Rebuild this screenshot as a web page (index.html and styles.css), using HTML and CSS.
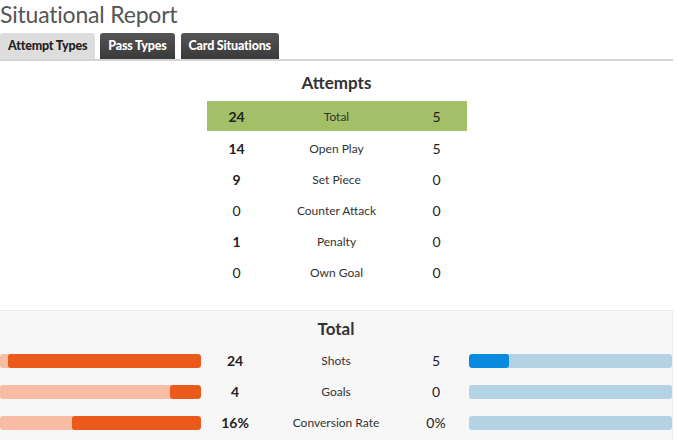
FILE: index.html
```html
<!DOCTYPE html>
<html>
<head>
<meta charset="utf-8">
<link rel="stylesheet" href="styles.css">
</head>
<body>
<div class="report">
  <h1 class="title">Situational Report</h1>
  <div class="tabs">
    <div class="tab active">Attempt Types</div>
    <div class="tab">Pass Types</div>
    <div class="tab">Card Situations</div>
  </div>
  <div class="attempts">
    <h2 class="heading">Attempts</h2>
    <div class="table">
      <div class="row highlight"><span class="num b">24</span><span class="label">Total</span><span class="num">5</span></div>
      <div class="row"><span class="num b">14</span><span class="label">Open Play</span><span class="num">5</span></div>
      <div class="row"><span class="num b">9</span><span class="label">Set Piece</span><span class="num">0</span></div>
      <div class="row"><span class="num">0</span><span class="label">Counter Attack</span><span class="num">0</span></div>
      <div class="row"><span class="num b">1</span><span class="label">Penalty</span><span class="num">0</span></div>
      <div class="row"><span class="num">0</span><span class="label">Own Goal</span><span class="num">0</span></div>
    </div>
  </div>
  <div class="total">
    <h2 class="heading">Total</h2>
    <div class="trow">
      <div class="bar home"><div class="fill" style="width:96%"></div></div>
      <span class="num b">24</span><span class="label">Shots</span><span class="num">5</span>
      <div class="bar away"><div class="fill" style="width:19.5%"></div></div>
    </div>
    <div class="trow">
      <div class="bar home"><div class="fill" style="width:15.5%"></div></div>
      <span class="num b">4</span><span class="label">Goals</span><span class="num">0</span>
      <div class="bar away"><div class="fill" style="width:0%"></div></div>
    </div>
    <div class="trow">
      <div class="bar home"><div class="fill" style="width:64%"></div></div>
      <span class="num b">16%</span><span class="label">Conversion Rate</span><span class="num">0%</span>
      <div class="bar away"><div class="fill" style="width:0%"></div></div>
    </div>
  </div>
</div>
</body>
</html>
```
FILE: styles.css
```css
html, body {
  margin: 0;
  padding: 0;
  background: #fff;
  font-family: Lato, "Open Sans", sans-serif;
  color: #333;
}
.report {
  width: 673px;
}
.title {
  margin: 0;
  font-size: 23px;
  font-weight: 400;
  color: #555;
  line-height: 28px;
  letter-spacing: -0.2px;
}
.tabs {
  display: flex;
  gap: 6px;
  margin-top: 5px;
  border-bottom: 2px solid #d4d4d4;
}
.tab {
  height: 26px;
  line-height: 26px;
  padding: 0 8px;
  font-size: 12.5px;
  font-weight: 900;
  letter-spacing: -0.2px;
  color: #fff;
  background: linear-gradient(#555, #3a3a3a);
  border-radius: 3px 3px 0 0;
}
.tab.active {
  background: #ddd;
  color: #222;
  margin-right: -1px;
}
.attempts {
  display: flex;
  flex-direction: column;
  align-items: center;
  padding-bottom: 22px;
}
.heading {
  margin: 0;
  font-size: 17px;
  font-weight: 700;
  color: #333;
  text-align: center;
  line-height: 22px;
}
.attempts .heading {
  margin-top: 11px;
  margin-bottom: 7px;
}
.table {
  width: 260px;
}
.row {
  display: grid;
  grid-template-columns: 60px 140px 60px;
  height: 31px;
  align-items: center;
  text-align: center;
}
.row.highlight {
  height: 30px;
  background: #a3bf68;
  margin-bottom: 2px;
}
.num {
  font-size: 14px;
  color: #222;
}
.num.b {
  font-weight: 700;
}
.label {
  font-size: 12px;
  color: #333;
}
.total {
  background: #f7f7f7;
  border-top: 1px solid #ececec;
  border-right: 1px solid #ececec;
  padding-top: 7px;
  padding-bottom: 10px;
}
.total .heading {
  margin-bottom: 5px;
}
.trow {
  display: grid;
  grid-template-columns: 201px 68px 134px 66px 1fr;
  height: 31px;
  align-items: center;
  text-align: center;
}
.bar {
  height: 14px;
  border-radius: 3px;
  display: flex;
  overflow: hidden;
}
.bar.home {
  background: #f7bca3;
  justify-content: flex-end;
}
.bar.home .fill {
  background: #eb5a1a;
  border-radius: 3px;
}
.bar.away {
  background: #b3d2e4;
}
.bar.away .fill {
  background: #0a8adf;
  border-radius: 3px;
}
.fill {
  height: 100%;
}
```
